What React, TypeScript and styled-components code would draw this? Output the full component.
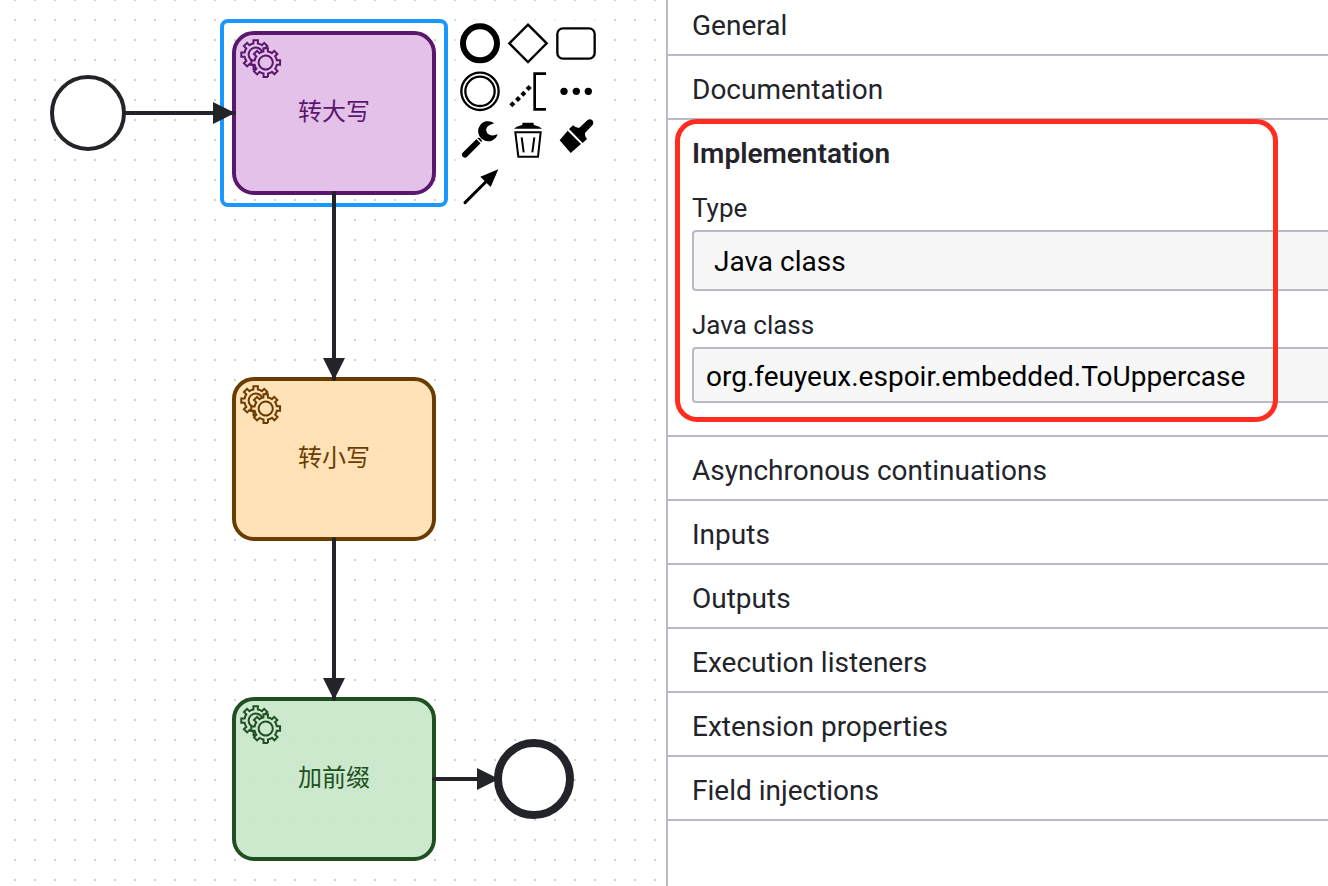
import React from "react";
import styled, { createGlobalStyle } from "styled-components";

const INK = "#22242a";
const LINE = "#b9bac8";

const GlobalStyle = createGlobalStyle`
  * { box-sizing: border-box; }
  body {
    margin: 0;
    background: #fff;
    color: ${INK};
    font-family: Roboto, "Noto Sans CJK SC", sans-serif;
  }
`;

const Editor = styled.main`
  display: flex;
  min-height: 100vh;
  overflow: hidden;
`;

const Canvas = styled.section`
  position: relative;
  flex: 1 1 666px;
  min-width: 0;
  overflow: hidden;
  background-image: conic-gradient(at 2px 2px, transparent 75%, #d2d2d2 0);
  background-size: 20px 20px;
  background-position: 14px -1px;
`;

const Task = styled.div<{ $x: number; $y: number; $stroke: string; $fill: string }>`
  position: absolute;
  left: ${(p) => p.$x}px;
  top: ${(p) => p.$y}px;
  display: flex;
  align-items: center;
  justify-content: center;
  width: 204px;
  height: 164px;
  padding-bottom: 6px;
  border: 4px solid ${(p) => p.$stroke};
  border-radius: 22px;
  background: ${(p) => p.$fill};
  background-clip: padding-box;
  color: ${(p) => p.$stroke};
  font-family: "Noto Sans CJK SC", sans-serif;
  font-size: 24px;
  line-height: 36px;
`;

const TaskIcon = styled.svg`
  position: absolute;
  left: -2px;
  top: -2px;
  width: 60px;
  height: 60px;
`;

const Selection = styled.div`
  position: absolute;
  left: 220px;
  top: 19px;
  width: 228px;
  height: 188px;
  border: 4px solid #1a98ff;
  border-radius: 8px;
`;

const Flows = styled.svg`
  position: absolute;
  left: 0;
  top: 0;
  width: 660px;
  height: 886px;
  pointer-events: none;
`;

const ContextPad = styled.div`
  position: absolute;
  left: 458px;
  top: 21px;
  display: grid;
  grid-template-columns: repeat(3, 44px);
  gap: 4px;
`;

const PadButton = styled.button`
  width: 44px;
  height: 44px;
  padding: 0;
  border: 0;
  background: #fff;
  box-shadow: 0 0 4px 2px #fff;
  cursor: pointer;

  svg {
    display: block;
    width: 44px;
    height: 44px;
  }
`;

const Panel = styled.aside`
  flex: 1 1 662px;
  min-width: 0;
  border-left: 2px solid ${LINE};
  background: #fff;
`;

/* The list is scrolled slightly past the top of its first group. */
const GroupList = styled.div`
  margin-top: -8px;
`;

const Group = styled.section`
  position: relative;
  border-bottom: 2px solid ${LINE};
`;

const GroupHeader = styled.button<{ $open?: boolean }>`
  display: block;
  width: 100%;
  height: 62px;
  padding: 5px 24px 0;
  border: 0;
  background: none;
  color: ${INK};
  font-family: inherit;
  font-size: 28px;
  font-weight: ${(p) => (p.$open ? 600 : 400)};
  line-height: 36px;
  text-align: left;
  cursor: pointer;
`;

const Entries = styled.div`
  display: flex;
  flex-direction: column;
  gap: 12px;
  padding: 4px 0 32px 24px;
`;

const Entry = styled.div`
  display: flex;
  flex-direction: column;
`;

const Label = styled.label`
  height: 44px;
  padding-top: 4px;
  font-size: 26px;
  line-height: 36px;
`;

const fieldStyle = `
  width: 100%;
  border: 2px solid ${LINE};
  border-right: 0;
  border-radius: 4px 0 0 4px;
  outline: 0;
  background: #f7f7f8;
  color: #000;
  font-family: inherit;
  font-size: 28px;
`;

const Select = styled.select`
  ${fieldStyle}
  appearance: none;
  height: 61px;
  padding: 2px 20px 0;
`;

const TextField = styled.input`
  ${fieldStyle}
  height: 56px;
  padding: 2px 12px 0;
`;

const Highlight = styled.div`
  position: absolute;
  inset: -1px 50px 13px 7px;
  border: 5px solid #ff2c1f;
  border-radius: 22px;
  pointer-events: none;
`;

const GEAR =
  "v -1.71335 c 0.352326,-0.0705 0.703932,-0.17838 1.047628,-0.32133 0.344416,-0.14465 0.665822,-0.32133 0.966377,-0.52145 l 1.19431,1.18005 1.567487,-1.57688 -1.195028,-1.18014 c 0.403376,-0.61394 0.683079,-1.29908 0.825447,-2.01824 l 1.622133,-0.01 v -2.2196 l -1.636514,0.01 c -0.07333,-0.35153 -0.178319,-0.70024 -0.323564,-1.04372 -0.145244,-0.34406 -0.321407,-0.6644 -0.522735,-0.96217 l 1.131035,-1.13631 -1.583305,-1.56293 -1.129598,1.13589 c -0.614052,-0.40108 -1.302883,-0.68093 -2.022633,-0.82247 l 0.0093,-1.61852 h -2.241173 l 0.0042,1.63124 c -0.353763,0.0736 -0.705369,0.17977 -1.049785,0.32371 -0.344415,0.14437 -0.665102,0.32092 -0.9635006,0.52006 l -1.1698628,-1.15823 -1.5667691,1.5792 1.1684265,1.15669 c -0.4026573,0.61283 -0.68308,1.29797 -0.8247287,2.01713 l -1.6588041,0.003 v 2.22174 l 1.6724648,-0.006 c 0.073327,0.35077 0.1797598,0.70243 0.3242851,1.04472 0.1452428,0.34448 0.3214064,0.6644 0.5227339,0.96066 l -1.1993431,1.19723 1.5840256,1.56011 1.1964668,-1.19348 c 0.6140517,0.40346 1.3028827,0.68232 2.0233517,0.82331 l 7.19e-4,1.69892 h 2.226848 z m 0.221462,-3.9957 c -1.788948,0.7502 -3.8576,-0.0928 -4.6097055,-1.87438 -0.7521065,-1.78321 0.090598,-3.84627 1.8802645,-4.59604 1.78823,-0.74936 3.856881,0.0929 4.608987,1.87437 0.752106,1.78165 -0.0906,3.84612 -1.879546,4.59605 z";

function Gears({ stroke, fill }: { stroke: string; fill: string }) {
  return (
    <TaskIcon viewBox="0 0 30 30" aria-hidden="true">
      <g stroke={stroke} fill={fill} strokeWidth="1">
        <path d={`m 12,18 ${GEAR}`} />
        <circle cx="15.86" cy="14.77" r="3.9" stroke="none" />
        <path d={`m 17,22 ${GEAR}`} />
      </g>
    </TaskIcon>
  );
}

const tasks = [
  { name: "转大写", y: 31, stroke: "#5b176d", fill: "rgba(225,190,231,.95)", solid: "#e3c1e8" },
  { name: "转小写", y: 377, stroke: "#6b3c00", fill: "rgba(255,224,178,.93)", solid: "#ffe1b8" },
  { name: "加前缀", y: 697, stroke: "#205022", fill: "rgba(200,230,201,.93)", solid: "#cce8cf" },
];

const padEntries: { label: string; icon: React.ReactNode }[] = [
  {
    label: "Append end event",
    icon: <circle cx="90" cy="85" r="51" fill="none" stroke="#000" strokeWidth="18" />,
  },
  {
    label: "Append gateway",
    icon: <path d="M234 29 L290 85 L234 141 L178 85 Z" fill="none" stroke="#000" strokeWidth="7" />,
  },
  {
    label: "Append task",
    icon: <rect x="322" y="40" width="112" height="91" rx="17" fill="none" stroke="#000" strokeWidth="7" />,
  },
  {
    label: "Append intermediate event",
    icon: (
      <g fill="none" stroke="#000" strokeWidth="7">
        <circle cx="90" cy="229" r="56" />
        <circle cx="90" cy="229" r="44" />
      </g>
    ),
  },
  {
    label: "Append text annotation",
    icon: (
      <g>
        <path d="M288 176 H254 V283 H288" fill="none" stroke="#000" strokeWidth="8" />
        <path d="M187 259l9 9-9 9-9-9zM204 243l9 9-9 9-9-9zM220 227l9 9-9 9-9-9zM236 210l9 9-9 9-9-9z" />
      </g>
    ),
  },
  {
    label: "Append element",
    icon: (
      <g>
        <circle cx="342" cy="229" r="11" />
        <circle cx="379" cy="229" r="11" />
        <circle cx="415" cy="229" r="11" />
      </g>
    ),
  },
  {
    label: "Change element",
    icon: (
      <g>
        <path d="M45 419 L86 378" stroke="#000" strokeWidth="18" strokeLinecap="round" />
        <path d="M133 325 A30 30 0 1 0 143 358 Q128 364 118 359 Q106 352 109 341 Q113 330 133 325 Z" />
        <path d="M78 368 L96 386" stroke="#fff" strokeWidth="4" />
      </g>
    ),
  },
  {
    label: "Delete",
    icon: (
      <g>
        <path d="M192 341 L200 335 L216 330 L218 323 H250 L252 330 L268 335 L276 341 Z" />
        <path d="M196 352 H272 L264 425 H205 Z M215 367 L221 412 M253 367 L247 412" fill="none" stroke="#000" strokeWidth="6" />
      </g>
    ),
  },
  {
    label: "Set color",
    icon: (
      <g>
        <path d="M329 376 L353 347 L393 387 L362 414 Z" />
        <path d="M357 342 L369 331 Q378 340 388 338 L412 316 Q420 310 427 316 Q433 323 427 331 L405 354 Q403 364 411 372 L398 384 Z" />
      </g>
    ),
  },
  {
    label: "Connect to other element",
    icon: (
      <g>
        <path d="M45 563 L110 498" stroke="#000" strokeWidth="9" strokeLinecap="round" />
        <path d="M145 463 L91 485 L122 516 Z" />
      </g>
    ),
  },
];

const closedGroups = [
  "Asynchronous continuations",
  "Inputs",
  "Outputs",
  "Execution listeners",
  "Extension properties",
  "Field injections",
];

function ClosedGroup({ title }: { title: string }) {
  return (
    <Group>
      <GroupHeader type="button">{title}</GroupHeader>
    </Group>
  );
}

export default function App() {
  return (
    <>
      <GlobalStyle />
      <Editor>
        <Canvas aria-label="Diagram">
          {tasks.map((t) => (
            <Task key={t.name} $x={232} $y={t.y} $stroke={t.stroke} $fill={t.fill}>
              <Gears stroke={t.stroke} fill={t.solid} />
              {t.name}
            </Task>
          ))}
          <Selection />
          <Flows viewBox="0 0 660 886" aria-hidden="true">
            <circle cx="88" cy="113" r="36" fill="#fff" fillOpacity=".95" stroke={INK} strokeWidth="4" />
            <g stroke={INK} strokeWidth="4" strokeLinecap="round">
              <path d="M126 113 H234" />
              <path d="M334 193 V379" />
              <path d="M334 539 V699" />
              <path d="M434 779 H498" />
            </g>
            <g fill={INK}>
              <path d="M213 102 L235 113 L213 124 Z" />
              <path d="M323 358 L334 380 L345 358 Z" />
              <path d="M323 678 L334 700 L345 678 Z" />
              <path d="M477 768 L499 779 L477 790 Z" />
            </g>
            <circle cx="534" cy="779" r="36" fill="#fff" fillOpacity=".95" stroke={INK} strokeWidth="8" />
          </Flows>
          <ContextPad>
            {padEntries.map((e, i) => (
              <PadButton key={e.label} type="button" aria-label={e.label}>
                <svg viewBox={`${24 + 144 * (i % 3)} ${18 + 144 * Math.floor(i / 3)} 132 132`} aria-hidden="true">
                  {e.icon}
                </svg>
              </PadButton>
            ))}
          </ContextPad>
        </Canvas>
        <Panel>
          <GroupList>
            <ClosedGroup title="General" />
            <ClosedGroup title="Documentation" />
            <Group>
              <GroupHeader type="button" $open>
                Implementation
              </GroupHeader>
              <Entries>
                <Entry>
                  <Label htmlFor="impl-type">Type</Label>
                  <Select id="impl-type" defaultValue="class">
                    <option value="class">Java class</option>
                  </Select>
                </Entry>
                <Entry>
                  <Label htmlFor="impl-class">Java class</Label>
                  <TextField id="impl-class" type="text" defaultValue="org.feuyeux.espoir.embedded.ToUppercase" />
                </Entry>
              </Entries>
              <Highlight />
            </Group>
            {closedGroups.map((title) => (
              <ClosedGroup key={title} title={title} />
            ))}
          </GroupList>
        </Panel>
      </Editor>
    </>
  );
}
